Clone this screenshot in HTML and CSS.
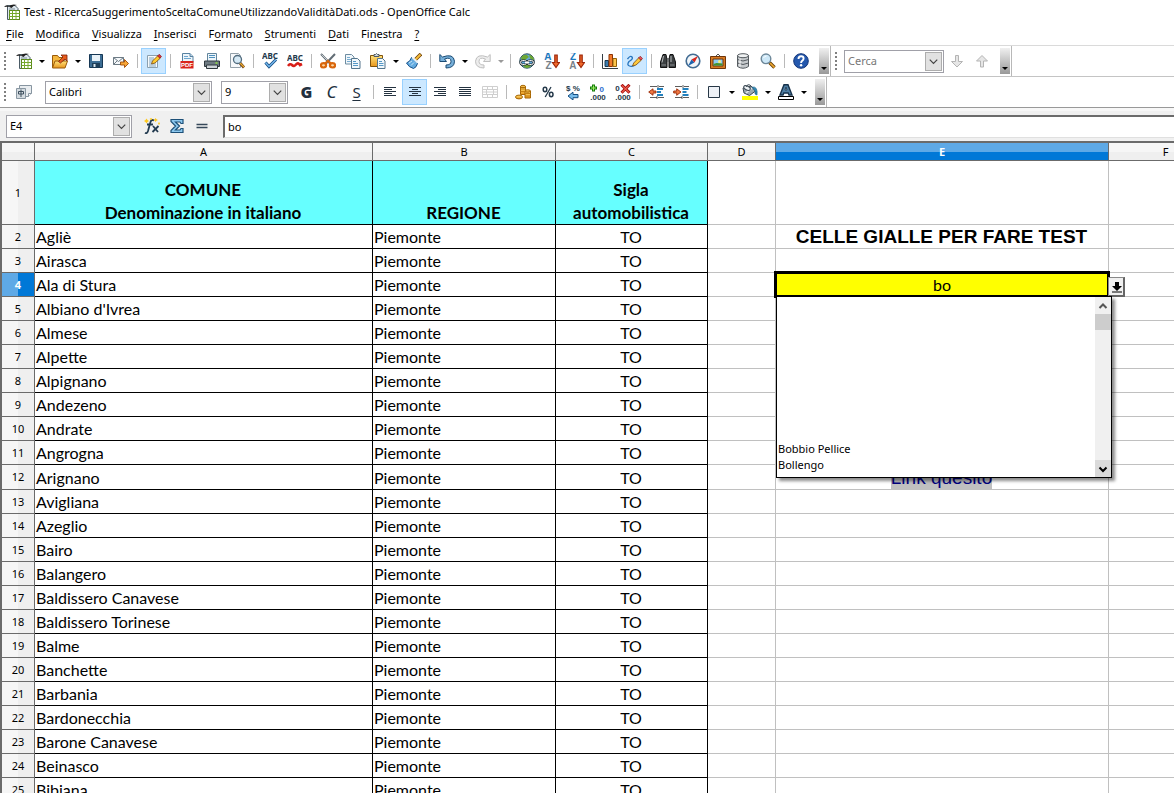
FILE: index.html
```html
<!DOCTYPE html>
<html lang="it">
<head>
<meta charset="utf-8">
<title>Test - RIcercaSuggerimentoSceltaComuneUtilizzandoValiditàDati.ods - OpenOffice Calc</title>
<link rel="stylesheet" href="styles.css">
</head>
<body>
<svg class="defs" aria-hidden="true">
<defs>
<linearGradient id="gold" x1="0" y1="0" x2="0" y2="1"><stop offset="0" stop-color="#ffe27a"/><stop offset="1" stop-color="#e8961c"/></linearGradient>
<symbol id="i-chev" viewBox="0 0 16 16"><path d="M4 6l4 4 4-4" fill="none" stroke="#444" stroke-width="1.3"/></symbol>
<symbol id="i-calc" viewBox="0 0 16 16"><path d="M3.500 1.500H11l3 3v11H3.500z" fill="#dfe8ee" stroke="#4b5b66"/><path d="M0 3q2.500-3 5-.5Q7.500-.3 13 1 9 1.500 7.500 4 4.500 2 0 3z" fill="#222"/><path d="M5 5h6" stroke="#7d8d98"/><rect x="5.500" y="6.500" width="10" height="9" fill="#fff" stroke="#5c8a1d"/><path d="M5.500 9.500h10M5.500 12.500h10M8.500 6.500v9M12 6.500v9" stroke="#74a92b"/></symbol>
<symbol id="i-open" viewBox="0 0 16 16"><path d="M.5 14.500v-12h5l1.500 2h5v4" fill="#f4b73e" stroke="#9a5a0a"/><path d="M.5 15l2.500-7h12.500l-2.500 7z" fill="url(#gold)" stroke="#9a5a0a"/><path d="M6.500 8.500L11 4 9 2h6v6l-2-2-4.500 4z" fill="#e85c1c" stroke="#7a1f08" stroke-width=".8"/></symbol>
<symbol id="i-save" viewBox="0 0 16 16"><path d="M1.500 1.500h13v13h-13z" fill="#3c6d94" stroke="#163754"/><path d="M4 2h8v6H4z" fill="#e9f2f8"/><path d="M4 10h8v4.500H4z" fill="#1d3e59"/><path d="M5.500 11h2v3h-2z" fill="#d9e6ef"/></symbol>
<symbol id="i-mail" viewBox="0 0 16 16"><path d="M.5 4.500h10v7H.5z" fill="#f6f9fb" stroke="#6d7b85"/><path d="M.5 4.500l5 4 5-4M.5 11.500L4 8" fill="none" stroke="#6d7b85"/><path d="M7.500 9h4V6.500l4 4-4 4V12h-4z" fill="#f8a838" stroke="#a14a08" stroke-width=".9"/></symbol>
<symbol id="i-edit" viewBox="0 0 16 16"><path d="M1.500 2.500h10v12h-10z" fill="#f7fafc" stroke="#8ba0ae"/><path d="M3 5h5M3 7h5M3 9h4M3 11h7M3 13h7" stroke="#7fa3bd"/><path d="M5.500 11l1-3L12 2.500l2.500 2.500L9 10z" fill="#ffcb2e" stroke="#7b4a0b" stroke-width=".8"/><path d="M11.500 3l1.800-1.800L15.500 3.500 14 5.200z" fill="#d9303c" stroke="#7a1015" stroke-width=".6"/></symbol>
<symbol id="i-pdf" viewBox="0 0 16 16"><path d="M3.500.5h7.500l3 3v6H3.500z" fill="#eef5fa" stroke="#5882a1"/><path d="M11 .5v3h3" fill="#bdd7e9" stroke="#5882a1"/><path d="M5 3.500h4M5 5.500h7" stroke="#6ea7cf"/><path d="M1.500 8h13v7.500h-13z" fill="#d9221c"/><text x="8" y="14" class="glyph-pdf">PDF</text></symbol>
<symbol id="i-print" viewBox="0 0 16 16"><path d="M3.500.5h9v8h-9z" fill="#eef6fb" stroke="#62859c"/><path d="M5 2.500h6M5 4.500h6" stroke="#4d90bd"/><path d="M.5 8h15v5.500H.5z" fill="#6e7a82" stroke="#2f383e"/><path d="M2.500 12h11v3.500h-11z" fill="#cfd5d9" stroke="#2f383e"/><path d="M11.500 10h2" stroke="#8ee23c" stroke-width="1.500"/></symbol>
<symbol id="i-preview" viewBox="0 0 16 16"><path d="M1.500.5h8l2 2v12h-10z" fill="#f6f8fa" stroke="#93a0a9"/><path d="M11 10l4 4.500" stroke="#6a3b12" stroke-width="2.800"/><path d="M11 10l4 4" stroke="#ecae31" stroke-width="1.200"/><circle cx="8.500" cy="6.500" r="4" fill="#d5e9f5" stroke="#506a7c" stroke-width="1.300"/></symbol>
<symbol id="i-spell" viewBox="0 0 16 16"><text x="8" y="6" class="glyph-abc">ABC</text><path d="M3.500 9.500l3.500 4 7-7" fill="none" stroke="#174f86" stroke-width="3"/><path d="M3.500 9.500l3.500 4 7-7" fill="none" stroke="#75b9ee" stroke-width="1.300"/></symbol>
<symbol id="i-auto" viewBox="0 0 16 16"><text x="8" y="8" class="glyph-abc">ABC</text><path d="M1 13q2-3 4-1t4-.5 4 .5l2-1" fill="none" stroke="#d81e18" stroke-width="2.600"/></symbol>
<symbol id="i-cut" viewBox="0 0 16 16"><path d="M1 1l9.500 10M15 1L5.500 11" stroke="#626d75" stroke-width="2"/><path d="M1.500 1.500l7 7" stroke="#dfe5e9" stroke-width=".8"/><ellipse cx="3.500" cy="12.300" rx="2.600" ry="2.200" fill="#fbd9a8" stroke="#d9670d" stroke-width="2.200"/><ellipse cx="12.500" cy="12.300" rx="2.600" ry="2.200" fill="#fbd9a8" stroke="#d9670d" stroke-width="2.200"/><path d="M5 10.500L8 8l3 2.500" fill="none" stroke="#d9670d" stroke-width="2.200"/></symbol>
<symbol id="i-copy" viewBox="0 0 16 16"><path d="M.5 1.500h6l2.500 2.500v7H.5z" fill="#f1f7fb" stroke="#6d8ca1"/><path d="M2 4.500h3M2 6.500h5M2 8.500h5" stroke="#77acd1"/><path d="M6.500 5.500h6l2.500 2.500v7.500H6.500z" fill="#f1f7fb" stroke="#54758c"/><path d="M8 8.500h3M8 10.500h5M8 12.500h5" stroke="#5598c6"/></symbol>
<symbol id="i-paste" viewBox="0 0 16 16"><path d="M.5 2.500h12v11H.5z" fill="url(#gold)" stroke="#80520b"/><path d="M4 3.500V1.500h1.500Q6.500-.5 7.500 1.500H9v2z" fill="#d5dde2" stroke="#4d5961"/><path d="M7.500 5.500h5l2.500 2.500v7.500H7.500z" fill="#f1f7fb" stroke="#54758c"/><path d="M9 8.500h3M9 10.500h4.500M9 12.500h4.500" stroke="#5598c6"/></symbol>
<symbol id="i-brush" viewBox="0 0 16 16"><path d="M9 7l6-6" stroke="#724407" stroke-width="3.600"/><path d="M9 7l5.500-5.500" stroke="#f6bd3d" stroke-width="2"/><path d="M5.500 4.500l6 6q-1 4-4 5Q3 14.500.5 10q4-1.500 5-5.500z" fill="#63abe0" stroke="#195289"/><path d="M3 10l3-2M5 12.500l3-3" stroke="#cbe6f8"/><path d="M6.500 4.500l5 5" stroke="#e9f3fa" stroke-width="1.800"/></symbol>
<symbol id="i-undo" viewBox="0 0 16 16"><path d="M.8 1.500V8.500H7.500L5.500 6Q12 3.500 12 8.500q0 3.500-5 3.500v3q8.500 0 8.500-6.800Q14.500 0 3.500 4z" fill="#76afd9" stroke="#1c4c74"/></symbol>
<symbol id="i-redo" viewBox="0 0 16 16"><path d="M15.200 1.500V8.500H8.500L10.500 6Q4 3.500 4 8.500q0 3.500 5 3.500v3Q.5 15 .5 8.200 1.500 0 12.500 4z" fill="#ededed" stroke="#bfbfbf"/></symbol>
<symbol id="i-globe" viewBox="0 0 16 16"><circle cx="8" cy="8" r="7.200" fill="#64a9d8" stroke="#2e5360"/><path d="M2 5Q4 1 8 2l2 2-4 3-3 .5zM10 1.500q5 1.500 5 6l-4-2zM3 11h10q-2 4-5 4t-5-4z" fill="#6da834"/><rect x="1.500" y="7.500" width="6" height="4" rx="2" fill="none" stroke="#222b30" stroke-width="2.200"/><rect x="8.500" y="7.500" width="6" height="4" rx="2" fill="none" stroke="#222b30" stroke-width="2.200"/><rect x="1.500" y="7.500" width="6" height="4" rx="2" fill="none" stroke="#f1f1f1"/><rect x="8.500" y="7.500" width="6" height="4" rx="2" fill="none" stroke="#f1f1f1"/><path d="M6 9.500h4" stroke="#fff"/></symbol>
<symbol id="i-down" viewBox="0 0 16 16"><path d="M10.800 2h2.400v7.500h2.300L12 14.500 8.500 9.500h2.300z" fill="#f06a2c" stroke="#9d2608" stroke-width="1.200"/></symbol>
<symbol id="i-az" viewBox="0 0 16 16"><text x="3.800" y="7" class="glyph-sort blue">A</text><text x="4.500" y="16" class="glyph-sort grey">Z</text><use href="#i-down"/></symbol>
<symbol id="i-za" viewBox="0 0 16 16"><text x="4" y="7" class="glyph-sort blue">Z</text><text x="3.800" y="16" class="glyph-sort grey">A</text><use href="#i-down"/></symbol>
<symbol id="i-chart" viewBox="0 0 16 16"><path d="M.5 1v14.500H16" fill="none" stroke="#333d44"/><path d="M3 7.500h3.500v6H3z" fill="#3b7cae" stroke="#16364f"/><path d="M7 1.500h3.500v12H7z" fill="#f27a2c" stroke="#8a3306"/><path d="M11 5.500h3.500v8H11z" fill="#fdc64d" stroke="#91620b"/></symbol>
<symbol id="i-draw" viewBox="0 0 16 16"><path d="M.5 6q3-4 4.500-2T2 8.500Q-.5 12 2.500 13q2 .8 5-.5" fill="none" stroke="#2775be" stroke-width="1.300"/><path d="M5.500 13l1.200-3L12 4.500l2.500 2.500L9 12z" fill="#ffc93b" stroke="#7b4a0b" stroke-width=".8"/><path d="M11.500 5l1.800-1.800 2.200 2.300L14 7.200z" fill="#e3505c" stroke="#7a1015" stroke-width=".6"/></symbol>
<symbol id="i-find" viewBox="0 0 16 16"><path d="M3 1.500h3l1 5v8H.5V9zM13 1.500h-3l-1 5v8h6.500V9z" fill="#3c4042" stroke="#111"/><path d="M7 5h2v4H7z" fill="#6c6f70"/><path d="M3.500 3L2 9.500M11 3v6" stroke="#b8bcbd"/><path d="M1.500 12H6M10 12h4.500" stroke="#8a8e90"/></symbol>
<symbol id="i-compass" viewBox="0 0 16 16"><circle cx="8" cy="8" r="6.800" fill="#f2f6f9" stroke="#426c93" stroke-width="1.600"/><path d="M13 3L9.500 9.500l-3-3z" fill="#d8261d"/><path d="M3 13l3.500-6.500 3 3z" fill="#1f64ad"/></symbol>
<symbol id="i-gallery" viewBox="0 0 16 16"><path d="M5 4l3-3 3 3" fill="none" stroke="#555"/><path d="M.5 3.500h15v12H.5z" fill="#d67a22" stroke="#6f350a"/><path d="M3 6h10v7H3z" fill="#8ecbf0" stroke="#6f350a"/><path d="M3.500 12.500V11l3-1 6 .5v2z" fill="#469229"/><circle cx="9.500" cy="8.500" r="1.500" fill="#f8ee79"/></symbol>
<symbol id="i-db" viewBox="0 0 16 16"><path d="M2.500 2.500v11q5.500 3.500 11 0v-11z" fill="#c5c9cc" stroke="#555b60"/><ellipse cx="8" cy="2.700" rx="5.500" ry="2" fill="#f0f2f3" stroke="#555b60"/><path d="M2.500 6.500q5.500 3 11 0M2.500 10q5.500 3 11 0" fill="none" stroke="#555b60"/><path d="M5 5.500v8" stroke="#fff"/></symbol>
<symbol id="i-zoom" viewBox="0 0 16 16"><path d="M9.500 9.500l5 5" stroke="#694008" stroke-width="3.400"/><path d="M10 10l4.500 4.500" stroke="#efa932" stroke-width="1.700"/><circle cx="6" cy="5.800" r="4.800" fill="#cde8f8" stroke="#6d8799" stroke-width="1.400"/><path d="M3.500 5q1-2 3-2" stroke="#fff" fill="none"/></symbol>
<symbol id="i-help" viewBox="0 0 16 16"><circle cx="8" cy="8" r="7.300" fill="#2458ad" stroke="#133579"/><path d="M5.500 6q0-2.700 2.600-2.700 2.500 0 2.500 2.300 0 1.500-1.500 2.300-1 .6-1 2" fill="none" stroke="#fff" stroke-width="1.900"/><circle cx="8.100" cy="12.200" r="1.200" fill="#fff"/></symbol>
<symbol id="i-adown" viewBox="0 0 16 16"><path d="M6.500 2.500h3v6H13.500L8 14 2.500 8.500h4z" fill="#e6e6e6" stroke="#b4b4b4"/></symbol>
<symbol id="i-aup" viewBox="0 0 16 16"><path d="M6.500 14h3V8H13.500L8 2.500 2.500 8h4z" fill="#e6e6e6" stroke="#b4b4b4"/></symbol>
<symbol id="i-style" viewBox="0 0 16 16"><path d="M3.500 1.500h12v8l-3 3h-9z" fill="#e9edf0" stroke="#8795a0"/><path d="M15.500 9.500h-3v3" fill="#fff" stroke="#8795a0"/><path d="M.5 4.500h9v10h-9z" fill="#d4dbe0" stroke="#8997a2"/><path d="M2.500 7.500h5v2.500h-5zM5 5.500v7.500" fill="none" stroke="#3d4e5d"/></symbol>
<symbol id="i-left" viewBox="0 0 16 16"><path d="M2 3.500h12M2 5.500h8M2 7.500h12M2 9.500h8M2 11.500h12" stroke="#243240"/></symbol>
<symbol id="i-center" viewBox="0 0 16 16"><path d="M2 3.500h12M5 5.500h6M2 7.500h12M5 9.500h6M2 11.500h12" stroke="#243240"/></symbol>
<symbol id="i-right" viewBox="0 0 16 16"><path d="M2 3.500h12M6 5.500h8M2 7.500h12M6 9.500h8M2 11.500h12" stroke="#243240"/></symbol>
<symbol id="i-just" viewBox="0 0 16 16"><path d="M2 3.500h12M2 5.500h12M2 7.500h12M2 9.500h12M2 11.500h12" stroke="#243240"/></symbol>
<symbol id="i-merge" viewBox="0 0 16 16"><path d="M.5 2.500h15v11H.5zM.5 5.500h15M.5 8h15M.5 10.500h15M5.500 2.500v3M10.500 2.500v3M4.500 5.500v5M11.500 5.500v5M5.500 10.500v3M10.500 10.500v3" fill="none" stroke="#cfcfcf"/></symbol>
<symbol id="i-coins" viewBox="0 0 16 16"><g fill="url(#gold)" stroke="#a56505"><path d="M5.500 2.500v8h5v-8z"/><ellipse cx="8" cy="2.500" rx="2.500" ry="1.200"/><path d="M10 7v7h5.500V7z"/><ellipse cx="12.700" cy="7" rx="2.700" ry="1.200"/><ellipse cx="4" cy="13" rx="3.500" ry="1.900"/></g><path d="M5.500 5h5M5.500 7.500h5M10 9.500h5.500M10 12h5.500" stroke="#c47f11"/></symbol>
<symbol id="i-pct" viewBox="0 0 16 16"><ellipse cx="5" cy="5.500" rx="1.800" ry="2.200" fill="none" stroke="#25394a" stroke-width="1.500"/><ellipse cx="11.200" cy="10.500" rx="1.800" ry="2.200" fill="none" stroke="#25394a" stroke-width="1.500"/><path d="M11 3L5.200 13" stroke="#25394a" stroke-width="1.300"/></symbol>
<symbol id="i-std" viewBox="0 0 16 16"><text x="8" y="7" class="glyph-num">$ %</text><path d="M13 10.500H8V8.200L3 12l5 4v-2.300h5z" fill="#77bceb" stroke="#164e81"/></symbol>
<symbol id="i-add" viewBox="0 0 16 16"><path d="M3.500.5v7M0 4h7" stroke="#147d08" stroke-width="3"/><path d="M3.500 1.500v5M1 4h5" stroke="#9ced65"/><text x="11.800" y="8" class="glyph-num blue2">0</text><text x="8" y="15.500" class="glyph-num">.000</text></symbol>
<symbol id="i-del" viewBox="0 0 16 16"><text x="2.500" y="7" class="glyph-num">0</text><text x="8" y="15.500" class="glyph-num">.000</text><path d="M6.500.8l8 8M14.500.8l-8 8" stroke="#a90d10" stroke-width="3"/><path d="M7 1.300l7 7M14 1.300l-7 7" stroke="#f2644e" stroke-width="1.100"/></symbol>
<symbol id="i-outd" viewBox="0 0 16 16"><path d="M2 2.500h7M10 1v3M11 2.500h5M10 13.500h6M2 13.500h7M9 12v3" stroke="#333" stroke-width=".8"/><path d="M9 5h6M9 8h4M9 11h6" stroke="#2280bd" stroke-width="1.800"/><path d="M8 7H5V4.800L.7 8 5 11.300V9h3z" fill="#ef7843" stroke="#9a2805" stroke-width=".9"/></symbol>
<symbol id="i-ind" viewBox="0 0 16 16"><path d="M2 2.500h7M10 1v3M11 2.500h5M10 13.500h6M2 13.500h7M9 12v3" stroke="#333" stroke-width=".8"/><path d="M9.500 5h6M9.500 8h4M9.500 11h6" stroke="#2280bd" stroke-width="1.800"/><path d="M.7 7h3V4.800L8 8l-4.300 3.300V9h-3z" fill="#ef7843" stroke="#9a2805" stroke-width=".9"/></symbol>
<symbol id="i-border" viewBox="0 0 16 16"><path d="M2.500 2.500h11v11h-11z" fill="#eef1f6" stroke="#273746"/></symbol>
<symbol id="i-fill" viewBox="0 0 16 16"><path d="M1 4l8-2 4.500 5-6 4.500L2 9z" fill="#9ba8b1" stroke="#3d4a54"/><path d="M4 9l6-5" stroke="#e5ebef" stroke-width="1.500"/><ellipse cx="5" cy="4" rx="3.500" ry="2" fill="#edf2f5" stroke="#3d4a54" transform="rotate(25 5 4)"/><path d="M4 3Q6-1 9 2" fill="none" stroke="#3d4a54"/><path d="M10 3q6-1 5 8l-2-1V7z" fill="#3389b4" stroke="#1b5f86" stroke-width=".6"/><path d="M0 12h16v4H0z" fill="#ff0"/></symbol>
<symbol id="i-font" viewBox="0 0 16 16"><path d="M2 11L6 .8h4L14 11h-3l-.8-2H5.800L5 11z" fill="#4f7ea3" stroke="#17324b" stroke-width="1.400"/><path d="M7 6L8 3l1 3z" fill="#fff" stroke="#17324b" stroke-width=".8"/><path d="M.5 12.500h15v3H.5z" fill="#fff" stroke="#000"/></symbol>
<symbol id="i-fx" viewBox="0 0 16 16"><path d="M10 2.500Q7.500 1 6.500 4L4 13q-1 3-3 1.800M3 6.500h6" fill="none" stroke="#233b50" stroke-width="1.800"/><path d="M9 8l5 6M14.500 8l-6 6" stroke="#233b50" stroke-width="1.800"/><path d="M2.500.5l1 1.500 1.500 1-1.500 1-1 1.500-1-1.500L0 3l1.500-1zM11.500 0l1 1.200L14 2l-1.500.8-1 1.200-.8-1.200L9.500 2l1.200-.8zM7 0l1.500 1L7 2 5.500 1zM15 4l1 1.500L15 7l-1-1.500z" fill="#ffc91d"/></symbol>
<symbol id="i-sum" viewBox="0 0 16 16"><path d="M2 1.500h12v4h-2L11 4H6.500l4 4-4 4H11l1-1.500h2v4H2v-2L6.500 8 2 3.500z" fill="#8cc8ef" stroke="#1d5078" stroke-width="1.200"/></symbol>
<symbol id="i-eq" viewBox="0 0 16 16"><path d="M2.500 6.500h11M2.500 9.500h11" stroke="#354759" stroke-width="1.300"/></symbol>
</defs>
</svg>

<header class="titlebar"><svg class="icon"><use href="#i-calc"/></svg><span>Test - RIcercaSuggerimentoSceltaComuneUtilizzandoValiditàDati.ods - OpenOffice Calc</span></header>

<nav class="menubar">
<button><u>F</u>ile</button><button><u>M</u>odifica</button><button><u>V</u>isualizza</button><button><u>I</u>nserisci</button><button>F<u>o</u>rmato</button><button><u>S</u>trumenti</button><button><u>D</u>ati</button><button>Fi<u>n</u>estra</button><button><u>?</u></button>
</nav>

<div class="toolrow">
<div class="toolbar">
<span class="grip"></span>
<button class="tool" aria-label="Nuovo"><svg class="icon"><use href="#i-calc"/></svg></button><button class="more" aria-label="Altri tipi"></button>
<button class="tool" aria-label="Apri"><svg class="icon"><use href="#i-open"/></svg></button><button class="more" aria-label="Recenti"></button>
<button class="tool" aria-label="Salva"><svg class="icon"><use href="#i-save"/></svg></button>
<button class="tool" aria-label="Invia"><svg class="icon"><use href="#i-mail"/></svg></button>
<span class="sep"></span>
<button class="tool on" aria-label="Modifica file"><svg class="icon"><use href="#i-edit"/></svg></button>
<span class="sep"></span>
<button class="tool" aria-label="Esporta PDF"><svg class="icon"><use href="#i-pdf"/></svg></button>
<button class="tool" aria-label="Stampa"><svg class="icon"><use href="#i-print"/></svg></button>
<button class="tool" aria-label="Anteprima"><svg class="icon"><use href="#i-preview"/></svg></button>
<span class="sep"></span>
<button class="tool" aria-label="Ortografia"><svg class="icon"><use href="#i-spell"/></svg></button>
<button class="tool" aria-label="Controllo automatico"><svg class="icon"><use href="#i-auto"/></svg></button>
<span class="sep"></span>
<button class="tool" aria-label="Taglia"><svg class="icon"><use href="#i-cut"/></svg></button>
<button class="tool" aria-label="Copia"><svg class="icon"><use href="#i-copy"/></svg></button>
<button class="tool" aria-label="Incolla"><svg class="icon"><use href="#i-paste"/></svg></button><button class="more" aria-label="Opzioni incolla"></button>
<button class="tool" aria-label="Pennello"><svg class="icon"><use href="#i-brush"/></svg></button>
<span class="sep"></span>
<button class="tool" aria-label="Annulla"><svg class="icon"><use href="#i-undo"/></svg></button><button class="more" aria-label="Elenco annulla"></button>
<button class="tool" aria-label="Ripristina"><svg class="icon"><use href="#i-redo"/></svg></button><button class="more off" aria-label="Elenco ripristina"></button>
<span class="sep"></span>
<button class="tool" aria-label="Collegamento"><svg class="icon"><use href="#i-globe"/></svg></button>
<button class="tool" aria-label="Ordine crescente"><svg class="icon"><use href="#i-az"/></svg></button>
<button class="tool" aria-label="Ordine decrescente"><svg class="icon"><use href="#i-za"/></svg></button>
<span class="sep"></span>
<button class="tool" aria-label="Grafico"><svg class="icon"><use href="#i-chart"/></svg></button>
<button class="tool on" aria-label="Disegno"><svg class="icon"><use href="#i-draw"/></svg></button>
<span class="sep"></span>
<button class="tool" aria-label="Trova"><svg class="icon"><use href="#i-find"/></svg></button>
<button class="tool" aria-label="Navigatore"><svg class="icon"><use href="#i-compass"/></svg></button>
<button class="tool" aria-label="Galleria"><svg class="icon"><use href="#i-gallery"/></svg></button>
<button class="tool" aria-label="Sorgenti dati"><svg class="icon"><use href="#i-db"/></svg></button>
<button class="tool" aria-label="Zoom"><svg class="icon"><use href="#i-zoom"/></svg></button>
<span class="sep"></span>
<button class="tool" aria-label="Guida"><svg class="icon"><use href="#i-help"/></svg></button>
<button class="overflow" aria-label="Altro"></button>
</div>
<div class="toolbar">
<span class="grip"></span>
<span class="combo search"><select aria-label="Cerca" class="muted"><option>Cerca</option></select><svg class="drop"><use href="#i-chev"/></svg></span>
<button class="tool" aria-label="Successivo"><svg class="icon"><use href="#i-adown"/></svg></button>
<button class="tool" aria-label="Precedente"><svg class="icon"><use href="#i-aup"/></svg></button>
<button class="overflow" aria-label="Altro"></button>
</div>
</div>

<div class="toolrow second">
<div class="toolbar">
<span class="grip"></span>
<button class="tool" aria-label="Stili"><svg class="icon"><use href="#i-style"/></svg></button>
<span class="combo family"><select aria-label="Tipo di carattere"><option>Calibri</option></select><svg class="drop"><use href="#i-chev"/></svg></span>
<span class="combo size"><select aria-label="Dimensione"><option>9</option></select><svg class="drop"><use href="#i-chev"/></svg></span>
<button class="tool letter bold">G</button>
<button class="tool letter ital">C</button>
<button class="tool letter under">S</button>
<span class="sep"></span>
<button class="tool" aria-label="Sinistra"><svg class="icon"><use href="#i-left"/></svg></button>
<button class="tool on" aria-label="Centrato"><svg class="icon"><use href="#i-center"/></svg></button>
<button class="tool" aria-label="Destra"><svg class="icon"><use href="#i-right"/></svg></button>
<button class="tool" aria-label="Giustificato"><svg class="icon"><use href="#i-just"/></svg></button>
<button class="tool" aria-label="Unisci celle"><svg class="icon"><use href="#i-merge"/></svg></button>
<span class="sep"></span>
<button class="tool" aria-label="Valuta"><svg class="icon"><use href="#i-coins"/></svg></button>
<button class="tool" aria-label="Percentuale"><svg class="icon"><use href="#i-pct"/></svg></button>
<button class="tool" aria-label="Formato standard"><svg class="icon"><use href="#i-std"/></svg></button>
<button class="tool" aria-label="Aggiungi decimale"><svg class="icon"><use href="#i-add"/></svg></button>
<button class="tool" aria-label="Elimina decimale"><svg class="icon"><use href="#i-del"/></svg></button>
<span class="sep"></span>
<button class="tool" aria-label="Riduci rientro"><svg class="icon"><use href="#i-outd"/></svg></button>
<button class="tool" aria-label="Aumenta rientro"><svg class="icon"><use href="#i-ind"/></svg></button>
<span class="sep"></span>
<button class="tool" aria-label="Bordo"><svg class="icon"><use href="#i-border"/></svg></button><button class="more" aria-label="Tipi di bordo"></button>
<button class="tool" aria-label="Sfondo"><svg class="icon"><use href="#i-fill"/></svg></button><button class="more" aria-label="Colori sfondo"></button>
<button class="tool" aria-label="Colore carattere"><svg class="icon"><use href="#i-font"/></svg></button><button class="more" aria-label="Colori carattere"></button>
<button class="overflow" aria-label="Altro"></button>
</div>
</div>

<div class="formulabar">
<span class="combo namebox"><select aria-label="Casella nome"><option>E4</option></select><svg class="drop"><use href="#i-chev"/></svg></span>
<div class="formula-tools">
<button class="tool" aria-label="Funzione"><svg class="icon"><use href="#i-fx"/></svg></button>
<button class="tool" aria-label="Somma"><svg class="icon"><use href="#i-sum"/></svg></button>
<button class="tool" aria-label="Uguale"><svg class="icon"><use href="#i-eq"/></svg></button>
</div>
<input class="formula" type="text" value="bo" aria-label="Riga di digitazione">
</div>

<main class="sheet">
<table>
<colgroup><col class="c-num"><col class="c-a"><col class="c-b"><col class="c-c"><col class="c-d"><col class="c-e"><col class="c-f"><col></colgroup>
<thead><tr><th></th><th>A</th><th>B</th><th>C</th><th>D</th><th class="sel">E</th><th>F</th><th></th></tr></thead>
<tbody>
<tr class="heads"><th>1</th><td class="noted">COMUNE<br>Denominazione in italiano</td><td>REGIONE</td><td>Sigla<br>automobilistica</td><td></td><td></td><td></td><td></td></tr>
<tr><th>2</th><td>Agliè</td><td>Piemonte</td><td>TO</td><td></td><td class="caption">CELLE GIALLE PER FARE TEST</td><td></td><td></td></tr>
<tr><th>3</th><td>Airasca</td><td>Piemonte</td><td>TO</td><td></td><td></td><td></td><td></td></tr>
<tr><th class="sel">4</th><td>Ala di Stura</td><td>Piemonte</td><td>TO</td><td></td><td class="active"><div class="cursor">bo</div><button class="celldrop" aria-label="Apri elenco"><svg viewBox="0 0 12 12"><path d="M4 1h4v4h3L6 10 1 5h3zM1 10.500h10v1H1z"/></svg></button>
<div class="popup"><ul role="listbox" aria-label="Comuni"><li></li><li></li><li></li><li></li><li></li><li></li><li></li><li></li><li></li><li>Bobbio Pellice</li><li>Bollengo</li><li>Borgaro Torinese</li></ul><div class="scroll"><button aria-label="Su"><svg viewBox="0 0 16 16"><path d="M4.500 10L8 6.500l3.500 3.500" fill="none" stroke="#555" stroke-width="2"/></svg></button><span class="thumb"></span><button class="pressed" aria-label="Giù"><svg viewBox="0 0 16 16"><path d="M4.500 6.500L8 10l3.500-3.500" fill="none" stroke="#000" stroke-width="2"/></svg></button></div></div></td><td></td><td></td></tr>
<tr><th>5</th><td>Albiano d'Ivrea</td><td>Piemonte</td><td>TO</td><td></td><td></td><td></td><td></td></tr>
<tr><th>6</th><td>Almese</td><td>Piemonte</td><td>TO</td><td></td><td></td><td></td><td></td></tr>
<tr><th>7</th><td>Alpette</td><td>Piemonte</td><td>TO</td><td></td><td></td><td></td><td></td></tr>
<tr><th>8</th><td>Alpignano</td><td>Piemonte</td><td>TO</td><td></td><td></td><td></td><td></td></tr>
<tr><th>9</th><td>Andezeno</td><td>Piemonte</td><td>TO</td><td></td><td></td><td></td><td></td></tr>
<tr><th>10</th><td>Andrate</td><td>Piemonte</td><td>TO</td><td></td><td></td><td></td><td></td></tr>
<tr><th>11</th><td>Angrogna</td><td>Piemonte</td><td>TO</td><td></td><td></td><td></td><td></td></tr>
<tr class="tall"><th>12</th><td>Arignano</td><td>Piemonte</td><td>TO</td><td></td><td class="linkcell"><a href="#">Link quesito</a></td><td></td><td></td></tr>
<tr><th>13</th><td>Avigliana</td><td>Piemonte</td><td>TO</td><td></td><td></td><td></td><td></td></tr>
<tr><th>14</th><td>Azeglio</td><td>Piemonte</td><td>TO</td><td></td><td></td><td></td><td></td></tr>
<tr><th>15</th><td>Bairo</td><td>Piemonte</td><td>TO</td><td></td><td></td><td></td><td></td></tr>
<tr><th>16</th><td>Balangero</td><td>Piemonte</td><td>TO</td><td></td><td></td><td></td><td></td></tr>
<tr><th>17</th><td>Baldissero Canavese</td><td>Piemonte</td><td>TO</td><td></td><td></td><td></td><td></td></tr>
<tr><th>18</th><td>Baldissero Torinese</td><td>Piemonte</td><td>TO</td><td></td><td></td><td></td><td></td></tr>
<tr><th>19</th><td>Balme</td><td>Piemonte</td><td>TO</td><td></td><td></td><td></td><td></td></tr>
<tr><th>20</th><td>Banchette</td><td>Piemonte</td><td>TO</td><td></td><td></td><td></td><td></td></tr>
<tr><th>21</th><td>Barbania</td><td>Piemonte</td><td>TO</td><td></td><td></td><td></td><td></td></tr>
<tr><th>22</th><td>Bardonecchia</td><td>Piemonte</td><td>TO</td><td></td><td></td><td></td><td></td></tr>
<tr><th>23</th><td>Barone Canavese</td><td>Piemonte</td><td>TO</td><td></td><td></td><td></td><td></td></tr>
<tr><th>24</th><td>Beinasco</td><td>Piemonte</td><td>TO</td><td></td><td></td><td></td><td></td></tr>
<tr><th>25</th><td>Bibiana</td><td>Piemonte</td><td>TO</td><td></td><td></td><td></td><td></td></tr>
</tbody>
</table>
</main>
</body>
</html>
```
FILE: styles.css
```css
* { box-sizing: border-box; }
body {
  margin: 0;
  height: 100vh;
  display: flex;
  flex-direction: column;
  overflow: hidden;
  background: #fff;
  color: #000;
  font: 11px/16px "Noto Sans", sans-serif;
}
button { margin: 0; padding: 0; border: 0; background: none; font: inherit; color: inherit; }
.defs { position: absolute; width: 0; height: 0; }
.icon { width: 16px; height: 16px; display: block; overflow: visible; }

.glyph-pdf { font: bold 6px "Liberation Sans", sans-serif; fill: #fff; text-anchor: middle; }
.glyph-abc { font: bold 8px "Noto Sans", sans-serif; fill: #22384b; text-anchor: middle; }
.glyph-sort { font: bold 10px "Liberation Sans", sans-serif; text-anchor: middle; }
.glyph-num { font: bold 8px "Liberation Sans", sans-serif; fill: #25394a; text-anchor: middle; }
.blue { fill: #1c78be; }
.blue2 { fill: #2b6fd0; }
.grey { fill: #78828a; }

.titlebar { display: flex; align-items: center; gap: 4px; height: 23px; padding-left: 4px; flex: none; }
.menubar { display: flex; gap: 12px; height: 23px; padding-left: 6px; flex: none; border-bottom: 1px solid #dadada; }
.menubar u { text-underline-offset: 2px; }

.toolrow { display: flex; height: 31px; flex: none; border-bottom: 1px solid #c4c4c4; }
.toolrow.second { border-bottom-color: #999; }
.toolbar { display: flex; align-items: center; padding: 0 1px 0 4px; border-right: 1px solid #b8b8b8; }
.grip { width: 2px; height: 18px; margin-right: 5px; background: repeating-linear-gradient(#808080 0 2px, transparent 2px 4px); }
.tool { width: 25px; height: 26px; display: flex; align-items: center; justify-content: center; border: 1px solid transparent; }
.tool.on { background: #cce8ff; border-color: #99d1ff; }
.more { width: 11px; height: 24px; display: flex; align-items: center; justify-content: center; }
.more::before, .overflow::before { content: ""; border: 3px solid transparent; border-top-color: #000; border-bottom: 0; }
.more.off::before { border-top-color: #999; }
.sep { width: 8px; height: 14px; background: linear-gradient(#b9b9b9, #b9b9b9) center / 1px 100% no-repeat; }
.overflow { width: 10px; height: 26px; margin-left: 6px; display: flex; align-items: flex-end; justify-content: center; padding-bottom: 4px; background: linear-gradient(#f0f0f0, #999); }

.combo { position: relative; display: flex; height: 23px; }
.combo select { width: 100%; appearance: none; margin: 0; border: 1px solid #a0a0a8; border-radius: 0; background: #fff; color: #000; padding: 0 20px 0 3px; font: inherit; }
.combo select.muted { color: #777; }
.drop { position: absolute; right: 2px; top: 2px; width: 17px; height: 19px; background: #e1e1e1; border: 1px solid #adadad; pointer-events: none; }
.search { width: 100px; margin-left: 2px; }
.family { width: 167px; margin: 0 9px; }
.size { width: 67px; margin-right: 6px; }
.letter { color: #22303e; font: 17px/20px "Noto Sans", sans-serif; }
.letter.bold { font-size: 16px; font-weight: 900; }
.letter.ital { font-style: italic; }
.letter.under { font-size: 15px; text-decoration: underline; text-underline-offset: 2px; }

.formulabar { display: flex; align-items: center; height: 33px; padding-left: 6px; flex: none; background: #f0f0f0; border-top: 3px solid #f7f7f7; }
.namebox { width: 126px; }
.formula-tools { display: flex; padding: 0 9px 0 7px; }
.formula { flex: 1; min-width: 0; height: 23px; border: 0; border-top: 2px solid #6b6b6b; border-left: 2px solid #6b6b6b; border-bottom: 1px solid #e0e0e0; padding: 0 3px; background: #fff; font: inherit; }

.sheet { flex: 1; min-height: 0; overflow: hidden; border-top: 2px solid #6b6b6b; border-left: 2px solid #6b6b6b; }
table { width: 110%; table-layout: fixed; border-collapse: separate; border-spacing: 0; font: 16px/24px Lato, sans-serif; }
.c-num { width: 33px; }
.c-a { width: 338px; }
.c-b { width: 183px; }
.c-c { width: 152px; }
.c-d { width: 68px; }
.c-e { width: 333px; }
.c-f { width: 114px; }
th { padding: 0; font: 11px/16px "Noto Sans", sans-serif; text-align: center; border-right: 1px solid #6b6b6b; border-bottom: 1px solid #6b6b6b; }
thead th { height: 18px; line-height: 17px; background: linear-gradient(#f6f6f6 50%, #efefef 50%); }
tbody th { background: linear-gradient(90deg, #f6f6f6 50%, #efefef 50%); }
thead th.sel { background: linear-gradient(#5ea9e6 50%, #0078d7 50%); color: #fff; font-weight: 700; }
tbody th.sel { background: linear-gradient(90deg, #5ea9e6 50%, #0078d7 50%); color: #fff; font-weight: 700; }
td { height: 24px; padding: 1px 2px 0 1px; line-height: 22px; border-right: 1px solid #c0c0c0; border-bottom: 1px solid #c0c0c0; white-space: nowrap; }
td:nth-child(-n+4) { border-color: #000; }
td:nth-child(4) { text-align: center; }
.heads td { height: 64px; vertical-align: bottom; text-align: center; font-size: 17px; line-height: 23px; font-weight: 700; }
.heads td:nth-child(-n+4) { background: #6ff; }
.heads .noted { background: linear-gradient(#f00, #f00) right top / 3px 3px no-repeat, #6ff; }
.tall td { height: 25px; }
.caption { font: bold 19px/22px "Liberation Sans", sans-serif; text-align: center; }
.linkcell { text-align: center; font: 19px/22px "Liberation Sans", sans-serif; }
.linkcell a { display: inline-block; line-height: 22px; background: #c0c0c0; color: #000080; text-decoration: none; }
td.active { position: relative; padding: 0; }
.cursor { position: absolute; inset: -2px; border: 3px solid #000; background: #ff0; text-align: center; }
.celldrop { position: absolute; left: 100%; top: 4px; width: 17px; height: 20px; padding: 2px; background: #f0f0f0; border: 1px solid #888; border-right: 2px solid #666; border-bottom: 2px solid #666; }
.celldrop svg { display: block; width: 12px; height: 12px; }
.popup { position: absolute; z-index: 2; left: 0; top: 100%; width: 336px; height: 182px; display: flex; background: #fff; border: 1px solid #000; box-shadow: 3px 3px 3px rgba(0, 0, 0, .45); }
.popup ul { flex: 1; height: 180px; overflow: hidden; margin: 0; padding: 0 1px; list-style: none; font: 11px/16px "Noto Sans", sans-serif; }
.popup li { height: 16px; }
.scroll { width: 16px; display: flex; flex-direction: column; background: #f0f0f0; }
.scroll button { height: 17px; display: flex; justify-content: center; align-items: center; }
.scroll button svg { width: 16px; height: 16px; }
.scroll .pressed { margin-top: auto; background: #dadada; }
.thumb { height: 16px; background: #cdcdcd; }
```
